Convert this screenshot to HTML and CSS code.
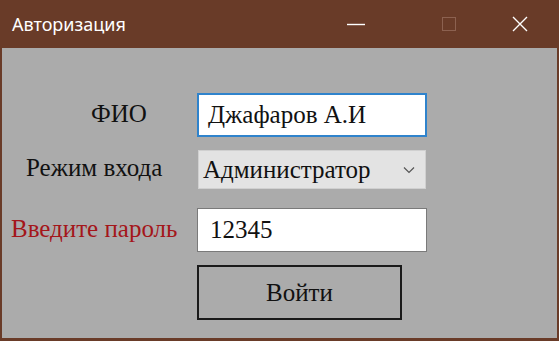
FILE: index.html
```html
<!DOCTYPE html>
<html>
<head>
    <link rel="stylesheet" href="styles.css">
</head>
<body>
    <div class="window">
        <div class="titleBar">
            <span class="title">Авторизация</span>
            <div class="controls">
                <span class="ctrl ctrlMin"><svg width="18" height="18" viewBox="0 0 18 18"><path d="M0 9.5H18" stroke="#fff" stroke-width="1.4"/></svg></span>
                <span class="ctrl ctrlMax"><svg width="14" height="14" viewBox="0 0 14 14"><rect x="0.5" y="0.5" width="13" height="13" fill="none" stroke="#8c6150" stroke-width="1"/></svg></span>
                <span class="ctrl ctrlClose"><svg width="16" height="16" viewBox="0 0 16 16"><path d="M1 1L15 15M15 1L1 15" stroke="#fff" stroke-width="1.4"/></svg></span>
            </div>
        </div>
        <div class="form">
            <label class="lbl lblName">ФИО</label>
            <div class="field fieldName focused">Джафаров А.И</div>

            <label class="lbl lblMode">Режим входа</label>
            <div class="field fieldMode combo">
                <span>Администратор</span>
                <svg width="12" height="8" viewBox="0 0 12 8"><path d="M1 1.5L6 6.5L11 1.5" fill="none" stroke="#555" stroke-width="1.2"/></svg>
            </div>

            <label class="lbl lblPass">Введите пароль</label>
            <div class="field fieldPass">12345</div>

            <div class="spacer"></div>
            <button class="loginButton">Войти</button>
        </div>
    </div>
</body>
</html>
```

FILE: styles.css
```css
body {
    margin: 0px;
    padding: 0px;
    width: 559px;
    height: 341px;
    overflow: hidden;
    background-color: #693b28;
}

.window {
    display: flex;
    flex-direction: column;
    height: 341px;
    box-sizing: border-box;
    border-left: 2px solid #693b28;
    border-right: 2px solid #693b28;
    border-bottom: 3px solid #693b28;
    background-color: #ababab;
}

.titleBar {
    height: 47px;
    display: flex;
    align-items: center;
    background-color: #693b28;
    color: white;
    font-family: "Noto Sans", sans-serif;
    font-size: 18px;
    padding-left: 10px;
    padding-bottom: 1px;
}

.title {
    flex: 1;
    margin-top: 1px;
}

.controls {
    display: flex;
    height: 100%;
}

.ctrl {
    width: 46px;
    display: flex;
    align-items: center;
    justify-content: center;
}

.ctrlMax {
    margin-left: 47px;
}

.ctrlClose {
    margin-left: 25px;
    margin-right: 14px;
}

.form {
    display: grid;
    grid-template-columns: 195px 230px;
    grid-template-rows: 44px 52px 63px 68px;
    padding-top: 45px;
    font-family: "Liberation Serif", "Times New Roman", serif;
    font-size: 25px;
    color: #111;
}

.lbl {
    align-self: center;
    white-space: nowrap;
    margin-top: -3px;
}

.lblName {
    margin-left: 89px;
}

.lblMode {
    margin-left: 24px;
    margin-top: 10px;
}

.lblPass {
    margin-left: 9px;
    color: #a4161a;
    margin-top: 16px;
}

.field {
    box-sizing: border-box;
    background-color: white;
    border: 1px solid #7a7a7a;
    display: flex;
    align-items: center;
    padding-left: 10px;
    font-size: 25px;
}

.fieldName.focused {
    border: 2px solid #2f83cc;
    padding-left: 9px;
}

.fieldMode {
    margin-top: 13px;
    margin-left: 1px;
    width: 228px;
    background-color: #e3e3e3;
    border-color: #d0d0d0;
    padding-left: 4px;
    padding-right: 10px;
    justify-content: space-between;
}

.fieldPass {
    margin-top: 19px;
    padding-left: 12px;
}

.loginButton {
    margin-top: 13px;
    width: 205px;
    box-sizing: border-box;
    background-color: #ababab;
    border: 2px solid #1a1a1a;
    font-family: "Liberation Serif", "Times New Roman", serif;
    font-size: 25px;
    color: #111;
    padding: 0;
}
```
